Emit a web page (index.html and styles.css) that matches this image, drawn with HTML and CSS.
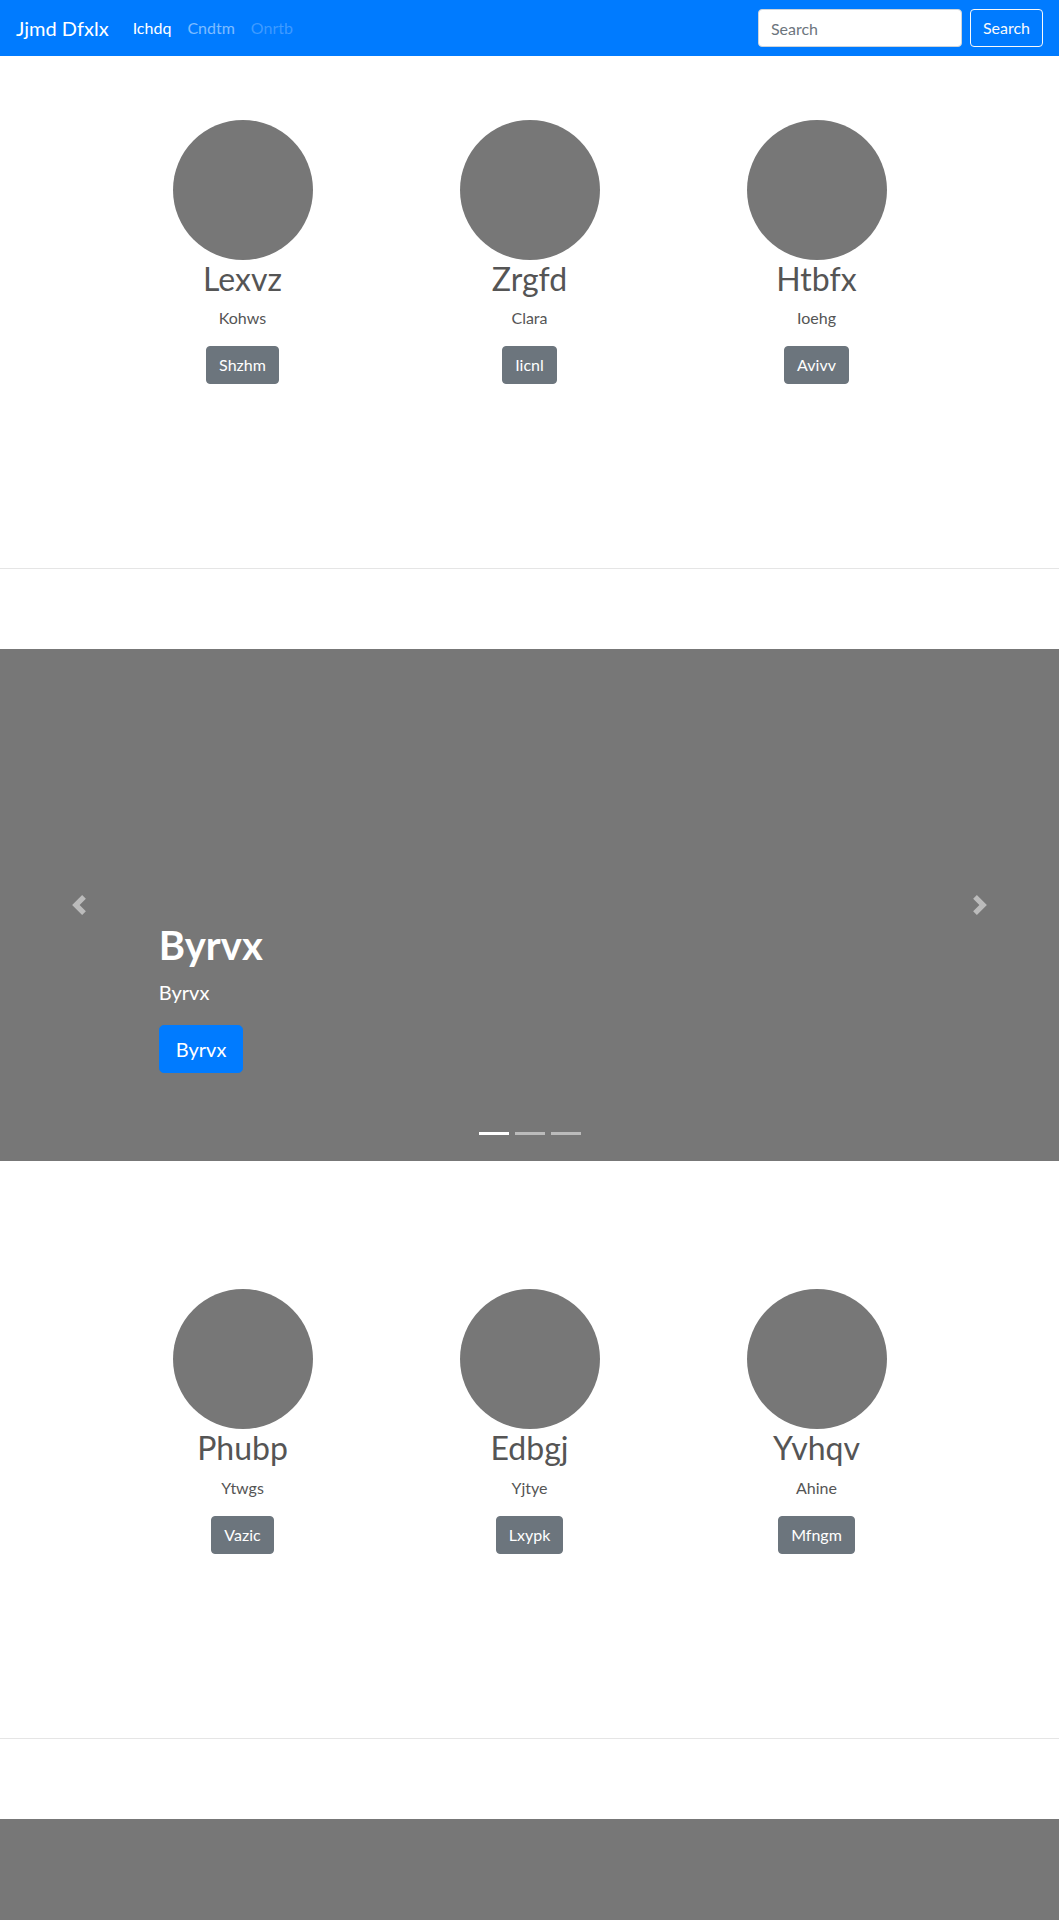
FILE: index.html
```html
<!DOCTYPE html>
<html lang="en">
<head>
<meta charset="utf-8">
<title>Jjmd Dfxlx</title>
<link rel="stylesheet" href="styles.css">
</head>
<body>
<nav class="navbar">
  <a class="brand" href="#">Jjmd Dfxlx</a>
  <ul class="nav">
    <li><a class="nav-link active" href="#">Ichdq</a></li>
    <li><a class="nav-link" href="#">Cndtm</a></li>
    <li><a class="nav-link disabled" href="#">Onrtb</a></li>
  </ul>
  <form class="search">
    <input class="search-input" type="text" placeholder="Search">
    <button class="btn-outline" type="button">Search</button>
  </form>
</nav>

<main>
  <section class="marketing">
    <div class="cols">
      <div class="col">
        <div class="avatar"></div>
        <h2 class="col-title">Lexvz</h2>
        <p class="col-text">Kohws</p>
        <p class="col-action"><a class="btn-secondary" href="#">Shzhm</a></p>
      </div>
      <div class="col">
        <div class="avatar"></div>
        <h2 class="col-title">Zrgfd</h2>
        <p class="col-text">Clara</p>
        <p class="col-action"><a class="btn-secondary" href="#">Iicnl</a></p>
      </div>
      <div class="col">
        <div class="avatar"></div>
        <h2 class="col-title">Htbfx</h2>
        <p class="col-text">Ioehg</p>
        <p class="col-action"><a class="btn-secondary" href="#">Avivv</a></p>
      </div>
    </div>
  </section>

  <hr class="divider">

  <section class="carousel">
    <div class="caption">
      <h1 class="caption-title">Byrvx</h1>
      <p class="caption-text">Byrvx</p>
      <p class="caption-action"><a class="btn-primary" href="#">Byrvx</a></p>
    </div>
    <a class="control prev" href="#">
      <svg width="20" height="20" viewBox="0 0 8 8"><path d="M5.25 0l-4 4 4 4 1.5-1.5L4.25 4l2.5-2.5L5.25 0z"/></svg>
    </a>
    <a class="control next" href="#">
      <svg width="20" height="20" viewBox="0 0 8 8"><path d="M2.75 0l-1.5 1.5L3.75 4l-2.5 2.5L2.75 8l4-4-4-4z"/></svg>
    </a>
    <ol class="indicators">
      <li class="active"></li>
      <li></li>
      <li></li>
    </ol>
  </section>

  <section class="marketing">
    <div class="cols">
      <div class="col">
        <div class="avatar"></div>
        <h2 class="col-title">Phubp</h2>
        <p class="col-text">Ytwgs</p>
        <p class="col-action"><a class="btn-secondary" href="#">Vazic</a></p>
      </div>
      <div class="col">
        <div class="avatar"></div>
        <h2 class="col-title">Edbgj</h2>
        <p class="col-text">Yjtye</p>
        <p class="col-action"><a class="btn-secondary" href="#">Lxypk</a></p>
      </div>
      <div class="col">
        <div class="avatar"></div>
        <h2 class="col-title">Yvhqv</h2>
        <p class="col-text">Ahine</p>
        <p class="col-action"><a class="btn-secondary" href="#">Mfngm</a></p>
      </div>
    </div>
  </section>

  <hr class="divider">

  <section class="carousel">
    <div class="caption">
      <h1 class="caption-title">Byrvx</h1>
      <p class="caption-text">Byrvx</p>
      <p class="caption-action"><a class="btn-primary" href="#">Byrvx</a></p>
    </div>
    <a class="control prev" href="#">
      <svg width="20" height="20" viewBox="0 0 8 8"><path d="M5.25 0l-4 4 4 4 1.5-1.5L4.25 4l2.5-2.5L5.25 0z"/></svg>
    </a>
    <a class="control next" href="#">
      <svg width="20" height="20" viewBox="0 0 8 8"><path d="M2.75 0l-1.5 1.5L3.75 4l-2.5 2.5L2.75 8l4-4-4-4z"/></svg>
    </a>
    <ol class="indicators">
      <li class="active"></li>
      <li></li>
      <li></li>
    </ol>
  </section>
</main>
</body>
</html>
```

FILE: styles.css
```css
* {
  box-sizing: border-box;
}

body {
  margin: 0;
  font-family: Lato, "Open Sans", "Liberation Sans", sans-serif;
  font-size: 16px;
  line-height: 1.5;
  color: #212529;
  background: #fff;
}

a {
  text-decoration: none;
}

/* Navbar */
.navbar {
  display: flex;
  align-items: center;
  height: 56px;
  padding: 8px 16px;
  background: #007bff;
}

.brand {
  color: #fff;
  font-size: 20px;
  line-height: 30px;
  padding: 5px 0;
  margin-right: 16px;
}

.nav {
  display: flex;
  list-style: none;
  margin: 0;
  padding: 0;
  flex: 1;
}

.nav-link {
  display: block;
  padding: 8px;
  color: rgba(255, 255, 255, 0.5);
}

.nav-link.active {
  color: #fff;
}

.nav-link.disabled {
  color: rgba(255, 255, 255, 0.25);
}

.search {
  display: flex;
  align-items: center;
  gap: 8px;
  margin: 0;
}

.search-input {
  width: 204px;
  height: 38px;
  padding: 6px 12px;
  border: 1px solid #ced4da;
  border-radius: 4px;
  font-family: inherit;
  font-size: 16px;
  color: #495057;
  background: #fff;
}

.search-input::placeholder {
  color: #6c757d;
}

.btn-outline {
  height: 38px;
  padding: 6px 12px;
  border: 1px solid #f8f9fa;
  border-radius: 4px;
  background: transparent;
  color: #f8f9fa;
  font-family: inherit;
  font-size: 16px;
  line-height: 24px;
}

/* Marketing */
.marketing {
  padding: 64px 0 184px;
}

.cols {
  display: grid;
  grid-template-columns: repeat(3, 287px);
  justify-content: center;
}

.col {
  display: flex;
  flex-direction: column;
  align-items: center;
  text-align: center;
}

.avatar {
  width: 140px;
  height: 140px;
  border-radius: 50%;
  background: #777;
}

.col-title {
  margin: 0 0 8px;
  font-size: 32px;
  font-weight: 400;
  line-height: 1.2;
  color: #555;
}

.col-text {
  margin: 0 0 16px;
  color: #555;
}

.col-action {
  margin: 0;
}

.btn-secondary {
  display: inline-block;
  padding: 6px 12px;
  border: 1px solid #6c757d;
  border-radius: 4px;
  background: #6c757d;
  color: #fff;
  line-height: 24px;
}

.divider {
  margin: 0 0 80px;
  border: 0;
  border-top: 1px solid rgba(0, 0, 0, 0.1);
}

/* Carousel */
.carousel {
  position: relative;
  height: 512px;
  margin-bottom: 64px;
  background: #777;
  display: flex;
  flex-direction: column;
  justify-content: flex-end;
  padding: 0 15% 88px;
  color: #fff;
}

.caption-title {
  margin: 0 0 8px;
  font-size: 40px;
  font-weight: 700;
  line-height: 1.2;
}

.caption-text {
  margin: 0 0 18px;
  font-size: 20px;
  line-height: 1.5;
}

.caption-action {
  margin: 0;
}

.btn-primary {
  display: inline-block;
  padding: 8px 16px;
  border: 1px solid #007bff;
  border-radius: 4.8px;
  background: #007bff;
  color: #fff;
  font-size: 20px;
  line-height: 30px;
}

.control {
  position: absolute;
  top: 0;
  bottom: 0;
  width: 15%;
  display: flex;
  align-items: center;
  justify-content: center;
  fill: #fff;
  opacity: 0.5;
}

.control.prev {
  left: 0;
}

.control.next {
  right: 0;
}

.indicators {
  position: absolute;
  left: 0;
  right: 0;
  bottom: 26px;
  display: flex;
  justify-content: center;
  list-style: none;
  margin: 0;
  padding: 0;
}

.indicators li {
  width: 30px;
  height: 3px;
  margin: 0 3px;
  background: rgba(255, 255, 255, 0.5);
}

.indicators li.active {
  background: #fff;
}
```
